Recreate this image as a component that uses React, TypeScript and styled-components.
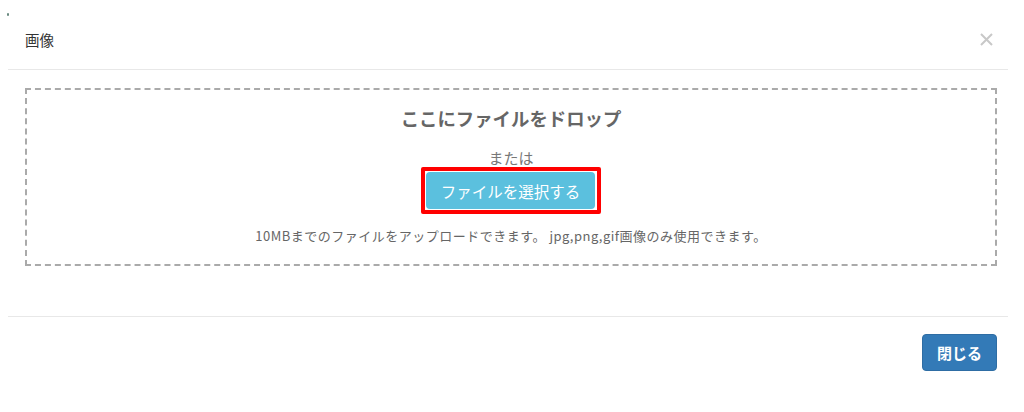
import React from 'react';
import styled, { createGlobalStyle } from 'styled-components';

const GlobalStyle = createGlobalStyle`
    html, body {
        margin: 0;
        padding: 0;
        background: #fff;
    }
    body {
        font-family: "Noto Sans CJK JP", "Noto Sans", sans-serif;
        color: #333;
    }
`;

const Page = styled.div`
    position: relative;
    width: 1024px;
    height: 412px;
    overflow: hidden;
`;

const Stray = styled.span`
    position: absolute;
    left: 7px;
    top: 13px;
    width: 2px;
    height: 3px;
    background: #6a8a80;
    border-radius: 1px;
`;

const Modal = styled.div`
    display: flex;
    flex-direction: column;
    width: 1000px;
    margin-left: 8px;
`;

const Header = styled.div`
    display: flex;
    align-items: center;
    justify-content: space-between;
    height: 59px;
    padding: 10px 15px 0 17px;
    border-bottom: 1px solid #e8e8e8;
`;

const Title = styled.h4`
    margin: 0;
    font-size: 14.5px;
    font-weight: normal;
    color: #333;
`;

const CloseX = styled.button`
    border: 0;
    background: none;
    padding: 0;
    cursor: pointer;
    display: flex;
    align-items: center;
    justify-content: center;
    width: 14px;
    height: 14px;
`;

const Body = styled.div`
    padding: 18px 11px 50px 17px;
    border-bottom: 1px solid #e8e8e8;
`;

const DropZone = styled.div`
    display: flex;
    flex-direction: column;
    align-items: center;
    height: 174px;
    border: 2px dashed #aaa;
`;

const DropTitle = styled.div`
    margin-top: 16px;
    font-size: 18.4px;
    font-weight: bold;
    color: #666;
    line-height: 24px;
`;

const Or = styled.div`
    margin-top: 19px;
    font-size: 15px;
    color: #777;
    line-height: 18px;
`;

const Highlight = styled.div`
    display: flex;
    border: 4px solid #f00;
    padding: 1px 2px 1px 1px;
    border-radius: 2px;
`;

const SelectButton = styled.button`
    width: 169px;
    height: 37px;
    border: 0;
    border-radius: 4px;
    background: #5bc0de;
    color: #fff;
    font-family: inherit;
    font-size: 15.5px;
    cursor: pointer;
`;

const Note = styled.div`
    margin-top: 14px;
    font-size: 13px;
    letter-spacing: 0.5px;
    color: #666;
    line-height: 16px;
`;

const Footer = styled.div`
    display: flex;
    justify-content: flex-end;
    padding: 17px 11px 0 0;
`;

const CloseButton = styled.button`
    width: 75px;
    height: 37px;
    border: 1px solid #2e6da4;
    border-radius: 4px;
    background: #337ab7;
    color: #fff;
    font-family: inherit;
    font-size: 15px;
    font-weight: bold;
    cursor: pointer;
`;

export default function App() {
    return (
        <Page>
            <GlobalStyle />
            <Stray />
            <Modal>
                <Header>
                    <Title>画像</Title>
                    <CloseX aria-label="close">
                        <svg width="13" height="13" viewBox="0 0 13 13">
                            <path d="M1 1 L12 12 M12 1 L1 12" stroke="#c8c8c8" strokeWidth="2" />
                        </svg>
                    </CloseX>
                </Header>
                <Body>
                    <DropZone>
                        <DropTitle>ここにファイルをドロップ</DropTitle>
                        <Or>または</Or>
                        <Highlight>
                            <SelectButton>ファイルを選択する</SelectButton>
                        </Highlight>
                        <Note>10MBまでのファイルをアップロードできます。 jpg,png,gif画像のみ使用できます。</Note>
                    </DropZone>
                </Body>
                <Footer>
                    <CloseButton>閉じる</CloseButton>
                </Footer>
            </Modal>
        </Page>
    );
}
